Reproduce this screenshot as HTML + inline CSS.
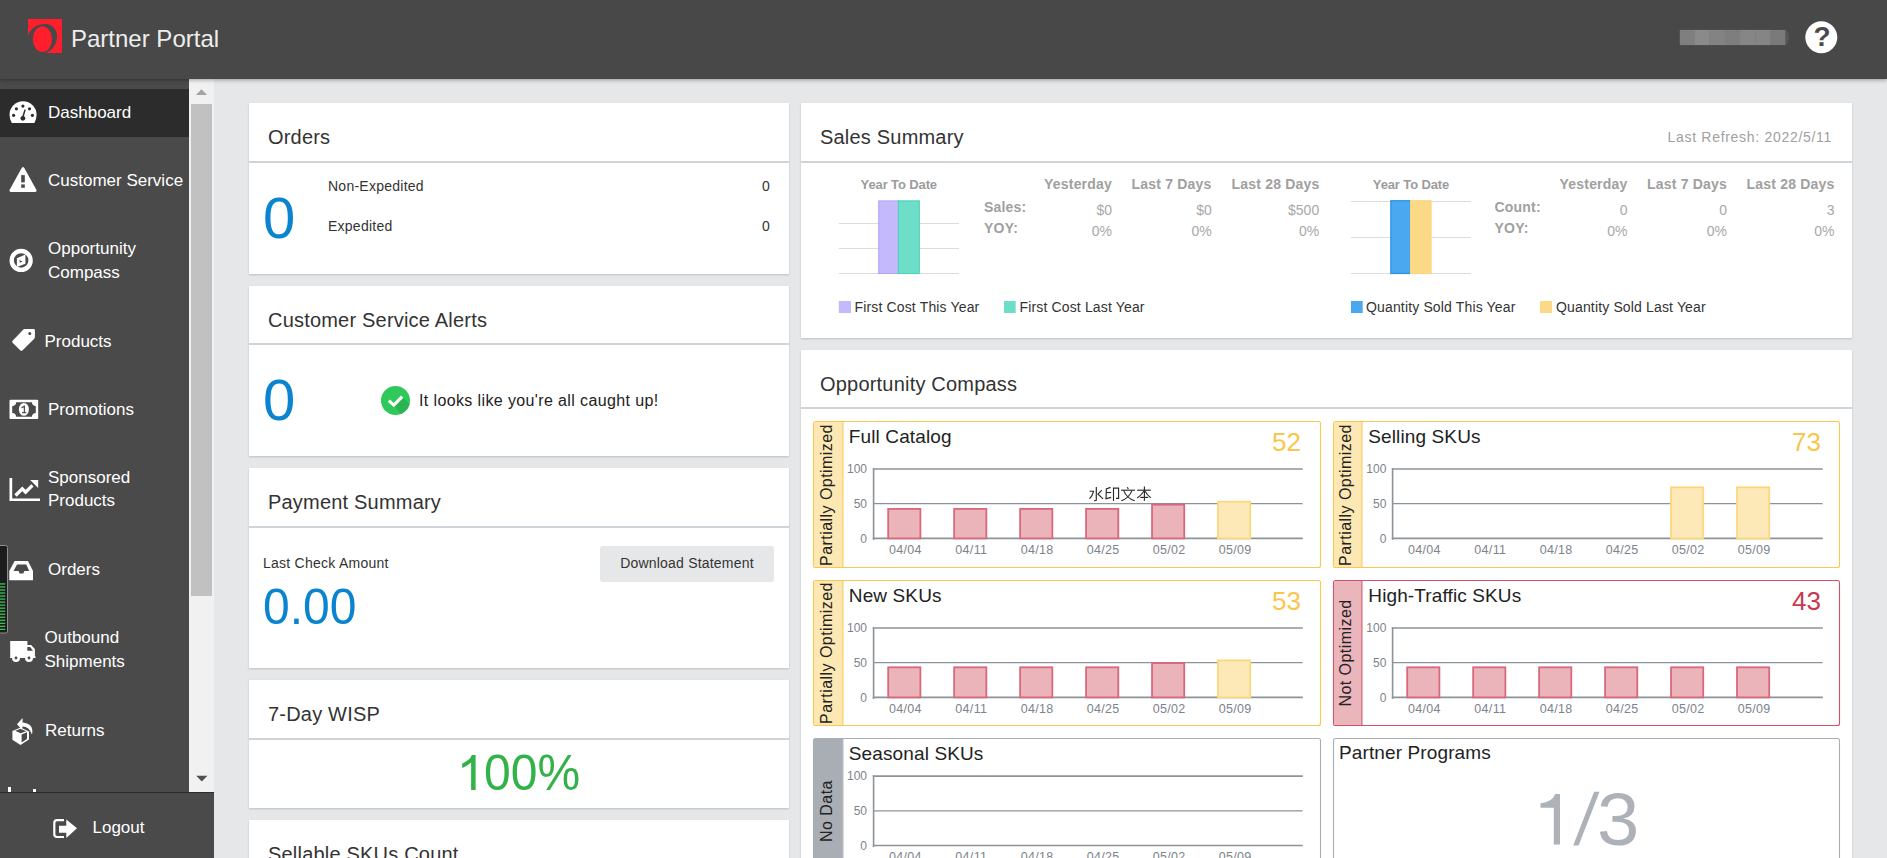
<!DOCTYPE html>
<html><head><meta charset="utf-8">
<style>
*{box-sizing:border-box;margin:0;padding:0}
html,body{width:1887px;height:858px;overflow:hidden;background:#e6e7e9;font-family:"Liberation Sans",sans-serif;color:#222}
.abs{position:absolute}
#hdr{position:absolute;left:0;top:0;width:1887px;height:79px;background:#484848;box-shadow:0 1px 4px rgba(0,0,0,.35);z-index:5}
#side{position:absolute;left:0;top:79px;width:189px;height:779px;background:#4a4a4a}
.nav{position:absolute;left:0;width:189px;color:#fff;font-size:17px;line-height:24px}
.nav span{position:absolute;white-space:nowrap}
.nav svg{position:absolute}
#sb{position:absolute;left:189px;top:79px;width:25px;height:713px;background:#f1f1f1}
#logout{position:absolute;left:0;top:792px;width:214px;height:66px;background:#4a4a4a;border-top:1px solid #2c2c2c}
.card{position:absolute;background:#fff;box-shadow:0 1px 2px rgba(0,0,0,.18)}
.card .ttl{position:absolute;left:19px;font-size:20px;letter-spacing:.2px;color:#333;white-space:nowrap;line-height:20px;margin-top:-1px}
.card .div{position:absolute;left:0;right:0;height:2px;background:#cfd4d9}
.t{position:absolute;white-space:nowrap}
.nt{font-size:17px;line-height:17px;color:#fff}
.big{color:#0a84cf;line-height:1}
.lbl{font-size:14px;line-height:14px;color:#333;letter-spacing:.25px}
.yl{font-size:12px;line-height:12px;color:#7d838a}
.xl{font-size:12.5px;line-height:12.5px;color:#7d838a;letter-spacing:.3px}
.st{font-size:19px;line-height:19px;color:#222;letter-spacing:.12px}
.sc{font-size:26px;line-height:26px}
.vt{font-size:16px;line-height:16px;color:#222;text-align:center;transform:rotate(-90deg);letter-spacing:.45px}
</style></head><body>

<!-- HEADER -->
<div id="hdr">
  <svg class="abs" style="left:28px;top:19px" width="34" height="34" viewBox="0 0 34 34">
    <rect width="34" height="34" fill="#fe1e2c"/>
    <path d="M0 16.6 C3 9 9 5 17 5 C24.5 5 29 10.5 29 17.5 C29 25.5 24 31.5 17.6 34 L0 34 Z" fill="#484848"/>
    <ellipse cx="14.4" cy="20.2" rx="9.6" ry="12.9" fill="#fe1e2c"/>
  </svg>
  <div class="t" style="left:71px;top:24.8px;font-size:24px;color:#eeeeee;line-height:28px">Partner Portal</div>
  <svg class="abs" style="left:0;top:0" width="1887" height="79"><path d="M1784 29.9 L1785.2 29.9 A3.6 7.6 0 0 1 1785.2 45.1 L1784 45.1 Z" fill="#575757"/><rect x="1679.8" y="29.9" width="15.25" height="15.2" fill="#7f7f7f"/><rect x="1695" y="29.9" width="14.85" height="15.2" fill="#8a8a8a"/><rect x="1709.8" y="29.9" width="15.25" height="15.2" fill="#838383"/><rect x="1725" y="29.9" width="15.05" height="15.2" fill="#7e7e7e"/><rect x="1740" y="29.9" width="15.15" height="15.2" fill="#868686"/><rect x="1755.1" y="29.9" width="14.95" height="15.2" fill="#858585"/><rect x="1770" y="29.9" width="15.25" height="15.2" fill="#7a7a7a"/><circle cx="1821.3" cy="37.2" r="16" fill="#fff"/></svg><div class="t" style="left:1806px;width:32px;text-align:center;top:22.5px;font-size:28px;line-height:28px;font-weight:bold;color:#4a4a4a">?</div>
</div>

<!-- SIDEBAR -->
<div id="side"></div>
<div class="nav" style="top:89px;height:48px;background:#2c2c2c"></div>
<div id="navitems">
<!-- Dashboard -->
<svg class="abs" style="left:0;top:89px" width="44" height="48" viewBox="0 89 44 48">
  <path d="M11.8 123 L34.4 123 Q36.6 118.8 36.6 114.8 A13.55 13.55 0 0 0 9.5 114.8 Q9.5 118.8 11.8 123 Z" fill="#fff"/>
  <g fill="#2c2c2c"><circle cx="22.9" cy="106.1" r="1.6"/><circle cx="16.4" cy="108.8" r="1.6"/><circle cx="29.5" cy="108.8" r="1.6"/><circle cx="13.6" cy="115.3" r="1.6"/><circle cx="32.4" cy="115.3" r="1.6"/><circle cx="22.9" cy="118.3" r="2.4"/></g>
  <path d="M22.6 118 L25.1 109.6" stroke="#2c2c2c" stroke-width="1.5"/>
</svg>
<div class="t nt" style="left:48px;top:104px">Dashboard</div>
<!-- Customer Service -->
<svg class="abs" style="left:0;top:160px" width="44" height="40" viewBox="0 160 44 40">
  <path d="M21.7 168 Q23 165.8 24.3 168 L36.2 189.6 Q37.4 192 34.8 192 L11.2 192 Q8.6 192 9.8 189.6 Z" fill="#fff"/>
  <rect x="21.2" y="175.1" width="3.6" height="7.3" fill="#4a4a4a"/><rect x="21.2" y="184.4" width="3.6" height="3.4" fill="#4a4a4a"/>
</svg>
<div class="t nt" style="left:48px;top:172px">Customer Service</div>
<!-- Opportunity Compass -->
<svg class="abs" style="left:0;top:240px" width="44" height="40" viewBox="0 240 44 40">
  <circle cx="21.15" cy="260.4" r="9.45" fill="none" stroke="#fff" stroke-width="4.4"/>
  <path d="M16.9 258.3 L25.4 254.6 L25.4 263.8 L16.9 267 Z" fill="#fff"/>
  <path d="M19.4 259.9 L22.5 261.4 L19.9 262.8 Z" fill="#4a4a4a"/>
</svg>
<div class="t nt" style="left:48px;top:240px">Opportunity</div>
<div class="t nt" style="left:48px;top:263.5px">Compass</div>
<!-- Products -->
<svg class="abs" style="left:0;top:320px" width="44" height="40" viewBox="0 320 44 40">
  <path d="M24.5 329 L33.6 329 Q34.9 329 34.9 330.3 L34.9 337 Q34.9 338.2 34 339.1 L22.6 350.2 Q21.4 351.3 20.2 350.2 L12.6 342.8 Q11.6 341.8 12.6 340.8 L23.4 329.6 Q23.9 329 24.5 329 Z" fill="#fff"/>
  <circle cx="29.8" cy="333.6" r="1.5" fill="#4a4a4a"/>
</svg>
<div class="t nt" style="left:44.5px;top:332.6px">Products</div>
<!-- Promotions -->
<svg class="abs" style="left:0;top:390px" width="44" height="40" viewBox="0 390 44 40">
  <rect x="9.5" y="399.8" width="28.7" height="19.2" rx="1" fill="#fff"/>
  <path d="M16.2 402.2 L31.9 402.2 A3.7 3.7 0 0 0 35.8 405.9 L35.8 413 A3.7 3.7 0 0 0 31.9 416.7 L16.2 416.7 A3.7 3.7 0 0 0 12.2 413 L12.2 405.9 A3.7 3.7 0 0 0 16.2 402.2 Z" fill="#4a4a4a"/>
  <ellipse cx="23.9" cy="409.4" rx="5" ry="6.4" fill="#fff"/>
  <path d="M21.5 408 L24.2 406.2 L24.4 406.2 L24.4 412.3 M22 412.6 L26.3 412.6" stroke="#555" stroke-width="1.3" fill="none"/>
</svg>
<div class="t nt" style="left:48px;top:400.6px">Promotions</div>
<!-- Sponsored Products -->
<svg class="abs" style="left:0;top:470px" width="44" height="40" viewBox="0 470 44 40">
  <path d="M9.5 478 L12.2 478 L12.2 498.4 L40 498.4 L40 500.9 L9.5 500.9 Z" fill="#fff"/>
  <path d="M15.5 495.5 L22.3 488.8 L25.6 492.2 L32.4 485.4" stroke="#fff" stroke-width="3.3" fill="none" stroke-linejoin="miter"/>
  <path d="M30.2 480.1 L38.2 480.1 L38.2 488 Z" fill="#fff"/>
</svg>
<div class="t nt" style="left:48px;top:468.6px">Sponsored</div>
<div class="t nt" style="left:48px;top:492.3px">Products</div>
<!-- Orders -->
<svg class="abs" style="left:0;top:540px" width="44" height="100" viewBox="0 540 44 100">
  <path d="M14.6 561 L28 561 L33 570.9 L33 580.2 L9.3 580.2 L9.3 570.9 Z" fill="#fff"/>
  <path d="M17 564.5 L26.2 564.5 L29.2 571 L24.3 571 L23.3 573.6 L19.6 573.6 L18.6 571 L13.5 571 Z" fill="#4a4a4a"/>
  <rect x="-3" y="545.5" width="10.5" height="87.5" rx="2" fill="#1c1c1c" stroke="#8f8f8f" stroke-width="1"/>
  <g fill="#3cc95a"><rect x="0" y="583.30" width="5.2" height="1.25"/><rect x="0" y="586.33" width="5.2" height="1.25"/><rect x="0" y="589.36" width="5.2" height="1.25"/><rect x="0" y="592.39" width="5.2" height="1.25"/><rect x="0" y="595.42" width="5.2" height="1.25"/><rect x="0" y="598.45" width="5.2" height="1.25"/><rect x="0" y="601.48" width="5.2" height="1.25"/><rect x="0" y="604.51" width="5.2" height="1.25"/><rect x="0" y="607.54" width="5.2" height="1.25"/><rect x="0" y="610.57" width="5.2" height="1.25"/><rect x="0" y="613.60" width="5.2" height="1.25"/><rect x="0" y="616.63" width="5.2" height="1.25"/><rect x="0" y="619.66" width="5.2" height="1.25"/><rect x="0" y="622.69" width="5.2" height="1.25"/><rect x="0" y="625.72" width="5.2" height="1.25"/><rect x="0" y="628.75" width="5.2" height="1.25"/></g>
</svg>
<div class="t nt" style="left:48px;top:561.4px">Orders</div>
<!-- Outbound Shipments -->
<svg class="abs" style="left:0;top:630px" width="44" height="40" viewBox="0 630 44 40">
  <path d="M10.2 641.1 L27.4 641.1 L27.4 645 L31.1 645 L34.9 648.9 L34.9 656.4 L35.6 656.4 L35.6 657.9 L10.2 657.9 Z" fill="#fff"/>
  <path d="M27.3 647 L30.2 647 L33 650.8 L27.3 650.8 Z" fill="#4a4a4a"/>
  <circle cx="16" cy="658" r="4" fill="#fff"/><circle cx="29" cy="658" r="4" fill="#fff"/>
  <circle cx="16" cy="658" r="1.4" fill="#4a4a4a"/><circle cx="29" cy="658" r="1.4" fill="#4a4a4a"/>
</svg>
<div class="t nt" style="left:44.5px;top:629.2px">Outbound</div>
<div class="t nt" style="left:44.5px;top:652.9px">Shipments</div>
<!-- Returns -->
<svg class="abs" style="left:0;top:710px" width="44" height="40" viewBox="0 710 44 40">
  <path d="M12.4 731 L20.6 727.6 L29 731.4 L29 739.4 L20.5 745 L12.4 739.8 Z" fill="#fff"/>
  <path d="M15.2 730.8 L20.6 728.8 L26.2 731.2 L20.6 733.2 Z" fill="#4a4a4a"/>
  <path d="M21.6 734.6 L27 732.2 L27 739 L21.6 742.6 Z" fill="#4a4a4a"/>
  <path d="M22.6 718 L17 724.2 L22.2 730 L22.4 726.4 Q29 726.2 32 734.6 Q34.2 723.4 22.6 722.4 Z" fill="#fff"/>
</svg>
<div class="t nt" style="left:45px;top:722px">Returns</div>
<div class="abs" style="left:8px;top:787px;width:3px;height:5px;background:#fff"></div>
<div class="abs" style="left:33px;top:789px;width:3px;height:3px;background:#fff"></div>
</div>
<div id="sb">
  <svg class="abs" style="left:0;top:0" width="25" height="713" viewBox="189 79 25 713">
    <path d="M195.9 95 L207.1 95 L201.5 89.2 Z" fill="#a3a3a3"/>
    <rect x="191" y="104" width="21" height="492" fill="#c1c1c1"/>
    <path d="M196.2 775.8 L207.4 775.8 L201.8 781.6 Z" fill="#505050"/>
  </svg>
</div>
<div id="logout">
  <svg class="abs" style="left:0;top:-1px" width="214" height="66" viewBox="0 792 214 66">
    <path d="M64 820.2 L57 820.2 Q54.3 820.2 54.3 822.9 L54.3 834.3 Q54.3 837 57 837 L64 837" stroke="#fff" stroke-width="2.2" fill="none"/>
    <path d="M59 825.7 L66.3 825.7 L66.3 819.6 L77 828.3 L66.3 838 L66.3 832.7 L59 832.7 Z" fill="#fff"/>
  </svg>
  <div class="t nt" style="left:92.5px;top:818.6px;margin-top:-793px">Logout</div>
</div>

<!-- CARDS LEFT COLUMN -->
<div class="card" style="left:249px;top:103px;width:540px;height:171px">
  <div class="ttl" style="top:25px">Orders</div>
  <div class="div" style="top:58px"></div>
  <div class="t big" style="left:14px;top:86px;font-size:58px">0</div>
  <div class="t lbl" style="left:79px;top:76px">Non-Expedited</div>
  <div class="t lbl" style="right:19px;top:76px">0</div>
  <div class="t lbl" style="left:79px;top:116px">Expedited</div>
  <div class="t lbl" style="right:19px;top:116px">0</div>
</div>
<div class="card" style="left:249px;top:286px;width:540px;height:170px">
  <div class="ttl" style="top:25px">Customer Service Alerts</div>
  <div class="div" style="top:57px"></div>
  <div class="t big" style="left:14px;top:85px;font-size:58px">0</div>
  <svg class="abs" style="left:132px;top:100px" width="29" height="29" viewBox="0 0 29 29">
    <defs><clipPath id="cc"><circle cx="14.5" cy="14.5" r="14.5"/></clipPath></defs>
    <circle cx="14.5" cy="14.5" r="14.5" fill="#2fc95b"/>
    <path d="M12.8 19.2 L21.2 10.6 L40 29 L30 40 Z" fill="#2bb551" clip-path="url(#cc)"/>
    <path d="M7.8 14.6 L12.8 19.2 L21.2 10.6" fill="none" stroke="#fff" stroke-width="3.1" stroke-linecap="butt" stroke-linejoin="miter"/>
  </svg>
  <div class="t" style="left:170px;top:106.8px;font-size:16px;line-height:16px;letter-spacing:.38px;color:#222">It looks like you're all caught up!</div>
</div>
<div class="card" style="left:249px;top:468px;width:540px;height:200px">
  <div class="ttl" style="top:25px">Payment Summary</div>
  <div class="div" style="top:58px"></div>
  <div class="t lbl" style="left:14px;top:88px">Last Check Amount</div>
  <div class="t big" style="left:14px;top:116px;font-size:48px;transform:scaleY(1.04);transform-origin:0 40.6px">0.00</div>
  <div class="abs" style="left:351px;top:78px;width:174px;height:36px;background:#e6e7e9;border-radius:3px"></div>
  <div class="t lbl" style="left:351px;width:174px;text-align:center;top:88px;letter-spacing:.2px">Download Statement</div>
</div>
<div class="card" style="left:249px;top:680px;width:540px;height:128px">
  <div class="ttl" style="top:25px">7-Day WISP</div>
  <div class="div" style="top:58px"></div>
  <svg class="abs" style="left:0;top:0" width="540" height="128" viewBox="249 680 540 128"><path d="M471.9 755 L475.6 755 L475.6 789.9 L471.1 789.9 L471.1 762.6 Q467.5 766 462.2 768 L462.2 763.5 Q469.5 760.5 471.9 755 Z" fill="#33b249"/></svg>
  <div class="t" style="left:235px;top:70px;font-size:48px;line-height:48px;color:#33b249;transform:scaleY(1.045);transform-origin:0 40.6px">00%</div>
</div>
<div class="card" style="left:249px;top:820px;width:540px;height:60px">
  <div class="ttl" style="top:25px">Sellable SKUs Count</div>
</div>

<!-- RIGHT COLUMN -->
<div class="card" style="left:801px;top:103px;width:1051px;height:235px">
  <div class="ttl" style="top:25px">Sales Summary</div>
  <div class="div" style="top:58px"></div>
  <div class="t" style="right:20px;top:27px;font-size:14px;line-height:14px;letter-spacing:.7px;color:#a0a0a0">Last Refresh: 2022/5/11</div>
</div>

<svg class="abs" style="left:0;top:0;pointer-events:none" width="1887" height="858">
  <g stroke="#dcdcdc" stroke-width="1.2">
    <line x1="838.8" y1="223.5" x2="959" y2="223.5"/><line x1="838.8" y1="248.5" x2="959" y2="248.5"/><line x1="838.8" y1="273.5" x2="959" y2="273.5"/>
    <line x1="1351" y1="201.5" x2="1471" y2="201.5"/><line x1="1351" y1="237.5" x2="1471" y2="237.5"/><line x1="1351" y1="273.5" x2="1471" y2="273.5"/>
  </g>
  <rect x="878.7" y="200.9" width="19.8" height="72.6" fill="#c3b9fb" stroke="#b0a3f8" stroke-width="1"/>
  <rect x="898.5" y="200.9" width="20.8" height="72.6" fill="#6fdec9" stroke="#4fd4b8" stroke-width="1.2"/>
  <rect x="1390.8" y="200.7" width="19.7" height="72.8" fill="#4aa8f0" stroke="#2b92e4" stroke-width="1.2"/>
  <rect x="1410.5" y="200.7" width="20.6" height="72.8" fill="#fcd987" stroke="#fbd57a" stroke-width="1"/>
  <rect x="838.8" y="301" width="12.2" height="12" fill="#c3b9fb"/>
  <rect x="1004" y="301" width="11.7" height="12" fill="#6fdec9"/>
  <rect x="1351" y="301" width="11.7" height="12" fill="#4aa8f0"/>
  <rect x="1540" y="301" width="12" height="12" fill="#fcd987"/>
</svg>

<div class="t" style="left:838.8px;width:120px;text-align:center;top:178px;font-size:13px;line-height:13px;font-weight:bold;color:#9c9c9c;letter-spacing:-.12px">Year To Date</div>
<div class="t" style="left:1351px;width:120px;text-align:center;top:178px;font-size:13px;line-height:13px;font-weight:bold;color:#9c9c9c;letter-spacing:-.12px">Year To Date</div>
<div class="t " style="right:775px;top:177.2px;font-size:14px;line-height:14px;font-weight:bold;color:#a0a0a0;letter-spacing:.2px">Yesterday</div>
<div class="t " style="right:675.5px;top:177.2px;font-size:14px;line-height:14px;font-weight:bold;color:#a0a0a0;letter-spacing:.2px">Last 7 Days</div>
<div class="t " style="right:567.5px;top:177.2px;font-size:14px;line-height:14px;font-weight:bold;color:#a0a0a0;letter-spacing:.2px">Last 28 Days</div>
<div class="t " style="right:259.5px;top:177.2px;font-size:14px;line-height:14px;font-weight:bold;color:#a0a0a0;letter-spacing:.2px">Yesterday</div>
<div class="t " style="right:160px;top:177.2px;font-size:14px;line-height:14px;font-weight:bold;color:#a0a0a0;letter-spacing:.2px">Last 7 Days</div>
<div class="t " style="right:52.5px;top:177.2px;font-size:14px;line-height:14px;font-weight:bold;color:#a0a0a0;letter-spacing:.2px">Last 28 Days</div>
<div class="t " style="left:984px;top:199.7px;font-size:14px;line-height:14px;font-weight:bold;color:#a0a0a0;letter-spacing:.2px">Sales:</div>
<div class="t " style="left:984px;top:220.8px;font-size:14px;line-height:14px;font-weight:bold;color:#a0a0a0;letter-spacing:.2px">YOY:</div>
<div class="t " style="left:1494.5px;top:199.7px;font-size:14px;line-height:14px;font-weight:bold;color:#a0a0a0;letter-spacing:.2px">Count:</div>
<div class="t " style="left:1494.5px;top:220.8px;font-size:14px;line-height:14px;font-weight:bold;color:#a0a0a0;letter-spacing:.2px">YOY:</div>
<div class="t " style="right:775px;top:203.2px;font-size:14px;line-height:14px;color:#a8a8a8">$0</div>
<div class="t " style="right:775px;top:223.8px;font-size:14px;line-height:14px;color:#a8a8a8">0%</div>
<div class="t " style="right:675.3px;top:203.2px;font-size:14px;line-height:14px;color:#a8a8a8">$0</div>
<div class="t " style="right:675.3px;top:223.8px;font-size:14px;line-height:14px;color:#a8a8a8">0%</div>
<div class="t " style="right:567.8px;top:203.2px;font-size:14px;line-height:14px;color:#a8a8a8">$500</div>
<div class="t " style="right:567.8px;top:223.8px;font-size:14px;line-height:14px;color:#a8a8a8">0%</div>
<div class="t " style="right:259.5px;top:203.2px;font-size:14px;line-height:14px;color:#a8a8a8">0</div>
<div class="t " style="right:259.5px;top:223.8px;font-size:14px;line-height:14px;color:#a8a8a8">0%</div>
<div class="t " style="right:160px;top:203.2px;font-size:14px;line-height:14px;color:#a8a8a8">0</div>
<div class="t " style="right:160px;top:223.8px;font-size:14px;line-height:14px;color:#a8a8a8">0%</div>
<div class="t " style="right:52.5px;top:203.2px;font-size:14px;line-height:14px;color:#a8a8a8">3</div>
<div class="t " style="right:52.5px;top:223.8px;font-size:14px;line-height:14px;color:#a8a8a8">0%</div>
<div class="t " style="left:854.5px;top:299.7px;font-size:14px;line-height:14px;color:#333;letter-spacing:.15px">First Cost This Year</div>
<div class="t " style="left:1019.5px;top:299.7px;font-size:14px;line-height:14px;color:#333;letter-spacing:.15px">First Cost Last Year</div>
<div class="t " style="left:1366px;top:299.7px;font-size:14px;line-height:14px;color:#333;letter-spacing:.15px">Quantity Sold This Year</div>
<div class="t " style="left:1556px;top:299.7px;font-size:14px;line-height:14px;color:#333;letter-spacing:.15px">Quantity Sold Last Year</div>
<div class="card" style="left:801px;top:350px;width:1051px;height:520px">
  <div class="ttl" style="top:25px">Opportunity Compass</div>
  <div class="div" style="top:57px"></div>
</div>
<svg class="abs" style="left:0;top:0" width="1887" height="858">
<rect x="813.5" y="421.5" width="507" height="146" rx="2" fill="#fff" stroke="#f9c84e" stroke-width="1.1"/>
<rect x="814" y="422" width="28.6" height="145" fill="#fde8b4"/>
<line x1="842.9" y1="422" x2="842.9" y2="567" stroke="#f9c84e" stroke-width="1.1"/>
<g stroke="#8d9399" stroke-width="1.6" fill="none" stroke-linecap="square"><line x1="873.6" y1="469.0" x2="1302" y2="469.0"/><line x1="873.6" y1="503.7" x2="1302" y2="503.7" stroke-width="1.2"/><line x1="873.6" y1="538.4" x2="1302" y2="538.4"/><line x1="873.6" y1="469.0" x2="873.6" y2="539.1"/></g>
<rect x="888.20" y="508.90" width="32.20" height="29.50" fill="#ebb4bb" stroke="#d9687b" stroke-width="1.8"/>
<rect x="954.16" y="508.90" width="32.20" height="29.50" fill="#ebb4bb" stroke="#d9687b" stroke-width="1.8"/>
<rect x="1020.12" y="508.90" width="32.20" height="29.50" fill="#ebb4bb" stroke="#d9687b" stroke-width="1.8"/>
<rect x="1086.08" y="508.90" width="32.20" height="29.50" fill="#ebb4bb" stroke="#d9687b" stroke-width="1.8"/>
<rect x="1152.04" y="504.70" width="32.20" height="33.70" fill="#ebb4bb" stroke="#d9687b" stroke-width="1.8"/>
<rect x="1218.00" y="501.70" width="32.20" height="36.70" fill="#fde9b7" stroke="#fcd77d" stroke-width="1.8"/>
<rect x="1333.5" y="421.5" width="506" height="146" rx="2" fill="#fff" stroke="#f9c84e" stroke-width="1.1"/>
<rect x="1334" y="422" width="27.6" height="145" fill="#fde8b4"/>
<line x1="1361.9" y1="422" x2="1361.9" y2="567" stroke="#f9c84e" stroke-width="1.1"/>
<g stroke="#8d9399" stroke-width="1.6" fill="none" stroke-linecap="square"><line x1="1392.6" y1="469.0" x2="1822" y2="469.0"/><line x1="1392.6" y1="503.7" x2="1822" y2="503.7" stroke-width="1.2"/><line x1="1392.6" y1="538.4" x2="1822" y2="538.4"/><line x1="1392.6" y1="469.0" x2="1392.6" y2="539.1"/></g>
<rect x="1671.04" y="487.30" width="32.20" height="51.10" fill="#fde9b7" stroke="#fcd77d" stroke-width="1.8"/>
<rect x="1737.00" y="487.30" width="32.20" height="51.10" fill="#fde9b7" stroke="#fcd77d" stroke-width="1.8"/>
<rect x="813.5" y="580.5" width="507" height="145" rx="2" fill="#fff" stroke="#f9c84e" stroke-width="1.1"/>
<rect x="814" y="581" width="28.6" height="144" fill="#fde8b4"/>
<line x1="842.9" y1="581" x2="842.9" y2="725" stroke="#f9c84e" stroke-width="1.1"/>
<g stroke="#8d9399" stroke-width="1.6" fill="none" stroke-linecap="square"><line x1="873.6" y1="628.0" x2="1302" y2="628.0"/><line x1="873.6" y1="662.7" x2="1302" y2="662.7" stroke-width="1.2"/><line x1="873.6" y1="697.4" x2="1302" y2="697.4"/><line x1="873.6" y1="628.0" x2="873.6" y2="698.1"/></g>
<rect x="888.20" y="667.30" width="32.20" height="30.10" fill="#ebb4bb" stroke="#d9687b" stroke-width="1.8"/>
<rect x="954.16" y="667.30" width="32.20" height="30.10" fill="#ebb4bb" stroke="#d9687b" stroke-width="1.8"/>
<rect x="1020.12" y="667.30" width="32.20" height="30.10" fill="#ebb4bb" stroke="#d9687b" stroke-width="1.8"/>
<rect x="1086.08" y="667.30" width="32.20" height="30.10" fill="#ebb4bb" stroke="#d9687b" stroke-width="1.8"/>
<rect x="1152.04" y="663.10" width="32.20" height="34.30" fill="#ebb4bb" stroke="#d9687b" stroke-width="1.8"/>
<rect x="1218.00" y="660.40" width="32.20" height="37.00" fill="#fde9b7" stroke="#fcd77d" stroke-width="1.8"/>
<rect x="1333.5" y="580.5" width="506" height="145" rx="2" fill="#fff" stroke="#cd5468" stroke-width="1.1"/>
<rect x="1334" y="581" width="27.6" height="144" fill="#ebb5bc"/>
<line x1="1361.9" y1="581" x2="1361.9" y2="725" stroke="#cd5468" stroke-width="1.1"/>
<g stroke="#8d9399" stroke-width="1.6" fill="none" stroke-linecap="square"><line x1="1392.6" y1="628.0" x2="1822" y2="628.0"/><line x1="1392.6" y1="662.7" x2="1822" y2="662.7" stroke-width="1.2"/><line x1="1392.6" y1="697.4" x2="1822" y2="697.4"/><line x1="1392.6" y1="628.0" x2="1392.6" y2="698.1"/></g>
<rect x="1407.20" y="667.30" width="32.20" height="30.10" fill="#ebb4bb" stroke="#d9687b" stroke-width="1.8"/>
<rect x="1473.16" y="667.30" width="32.20" height="30.10" fill="#ebb4bb" stroke="#d9687b" stroke-width="1.8"/>
<rect x="1539.12" y="667.30" width="32.20" height="30.10" fill="#ebb4bb" stroke="#d9687b" stroke-width="1.8"/>
<rect x="1605.08" y="667.30" width="32.20" height="30.10" fill="#ebb4bb" stroke="#d9687b" stroke-width="1.8"/>
<rect x="1671.04" y="667.30" width="32.20" height="30.10" fill="#ebb4bb" stroke="#d9687b" stroke-width="1.8"/>
<rect x="1737.00" y="667.30" width="32.20" height="30.10" fill="#ebb4bb" stroke="#d9687b" stroke-width="1.8"/>
<rect x="813.5" y="738.5" width="507" height="145" rx="2" fill="#fff" stroke="#a9aeb5" stroke-width="1.1"/>
<rect x="814" y="739" width="28.6" height="144" fill="#a9aeb5"/>
<line x1="842.9" y1="739" x2="842.9" y2="883" stroke="#a9aeb5" stroke-width="1.1"/>
<g stroke="#8d9399" stroke-width="1.6" fill="none" stroke-linecap="square"><line x1="873.6" y1="776.1" x2="1302" y2="776.1"/><line x1="873.6" y1="810.8000000000001" x2="1302" y2="810.8000000000001" stroke-width="1.2"/><line x1="873.6" y1="845.5" x2="1302" y2="845.5"/><line x1="873.6" y1="776.1" x2="873.6" y2="846.2"/></g>
<rect x="1333.5" y="738.5" width="506" height="145" rx="2" fill="#fff" stroke="#a9aeb5" stroke-width="1.1"/>
<g stroke="#2a2a2a" stroke-width="1.15" fill="none"><path d="M1096.3 487 L1096.3 500.3 L1094 500.8"/><path d="M1089.5 491.2 L1093.6 491.2 Q1092.5 496 1089.5 498.9"/><path d="M1101.8 490.2 L1097.8 494.4"/><path d="M1097.8 494 L1103.1 498.9"/><path d="M1110.5 487.4 L1106.3 488.9 L1106.1 498.7"/><path d="M1106.3 492.5 L1111.2 492.5"/><path d="M1105.4 498.9 L1111.2 497.4"/><path d="M1113.5 501 L1113.5 488.1 L1118.6 488.1 L1118.6 498.4 L1116 498.4"/><path d="M1127.3 487.2 L1128.3 489.1"/><path d="M1121.1 490.2 L1134.9 490.2"/><path d="M1131.9 490.6 Q1129 498 1121.3 500.8"/><path d="M1123.7 490.6 Q1126.5 498 1134.7 500.8"/><path d="M1137.2 490.2 L1150.8 490.2"/><path d="M1144.4 486.4 L1144.4 500.8"/><path d="M1144 491 Q1141 495.5 1137.2 498"/><path d="M1144.9 491 Q1147.5 495.5 1150.8 497.8"/><path d="M1140.2 497.4 L1148.2 497.4"/></g>
</svg>
<div class="t yl" style="right:1020.0px;top:463.2px">100</div>
<div class="t yl" style="right:1020.0px;top:497.9px">50</div>
<div class="t yl" style="right:1020.0px;top:532.6px">0</div>
<div class="t xl" style="left:875.3px;width:60px;text-align:center;top:543.9px">04/04</div>
<div class="t xl" style="left:941.3px;width:60px;text-align:center;top:543.9px">04/11</div>
<div class="t xl" style="left:1007.2px;width:60px;text-align:center;top:543.9px">04/18</div>
<div class="t xl" style="left:1073.2px;width:60px;text-align:center;top:543.9px">04/25</div>
<div class="t xl" style="left:1139.1px;width:60px;text-align:center;top:543.9px">05/02</div>
<div class="t xl" style="left:1205.1px;width:60px;text-align:center;top:543.9px">05/09</div>
<div class="t st" style="left:848.8px;top:426.6px">Full Catalog</div>
<div class="t sc" style="right:586px;top:429px;color:#f9c64c">52</div>
<div class="t vt" style="left:746.5px;top:486.5px;width:160px">Partially Optimized</div>
<div class="t yl" style="right:500.7px;top:463.2px">100</div>
<div class="t yl" style="right:500.7px;top:497.9px">50</div>
<div class="t yl" style="right:500.7px;top:532.6px">0</div>
<div class="t xl" style="left:1394.3px;width:60px;text-align:center;top:543.9px">04/04</div>
<div class="t xl" style="left:1460.3px;width:60px;text-align:center;top:543.9px">04/11</div>
<div class="t xl" style="left:1526.2px;width:60px;text-align:center;top:543.9px">04/18</div>
<div class="t xl" style="left:1592.2px;width:60px;text-align:center;top:543.9px">04/25</div>
<div class="t xl" style="left:1658.1px;width:60px;text-align:center;top:543.9px">05/02</div>
<div class="t xl" style="left:1724.1px;width:60px;text-align:center;top:543.9px">05/09</div>
<div class="t st" style="left:1368.3px;top:426.6px">Selling SKUs</div>
<div class="t sc" style="right:66px;top:429px;color:#f9c64c">73</div>
<div class="t vt" style="left:1265.5px;top:486.5px;width:160px">Partially Optimized</div>
<div class="t yl" style="right:1020.0px;top:622.2px">100</div>
<div class="t yl" style="right:1020.0px;top:656.9px">50</div>
<div class="t yl" style="right:1020.0px;top:691.6px">0</div>
<div class="t xl" style="left:875.3px;width:60px;text-align:center;top:702.9px">04/04</div>
<div class="t xl" style="left:941.3px;width:60px;text-align:center;top:702.9px">04/11</div>
<div class="t xl" style="left:1007.2px;width:60px;text-align:center;top:702.9px">04/18</div>
<div class="t xl" style="left:1073.2px;width:60px;text-align:center;top:702.9px">04/25</div>
<div class="t xl" style="left:1139.1px;width:60px;text-align:center;top:702.9px">05/02</div>
<div class="t xl" style="left:1205.1px;width:60px;text-align:center;top:702.9px">05/09</div>
<div class="t st" style="left:848.8px;top:585.6px">New SKUs</div>
<div class="t sc" style="right:586px;top:588px;color:#f9c64c">53</div>
<div class="t vt" style="left:746.5px;top:645.0px;width:160px">Partially Optimized</div>
<div class="t yl" style="right:500.7px;top:622.2px">100</div>
<div class="t yl" style="right:500.7px;top:656.9px">50</div>
<div class="t yl" style="right:500.7px;top:691.6px">0</div>
<div class="t xl" style="left:1394.3px;width:60px;text-align:center;top:702.9px">04/04</div>
<div class="t xl" style="left:1460.3px;width:60px;text-align:center;top:702.9px">04/11</div>
<div class="t xl" style="left:1526.2px;width:60px;text-align:center;top:702.9px">04/18</div>
<div class="t xl" style="left:1592.2px;width:60px;text-align:center;top:702.9px">04/25</div>
<div class="t xl" style="left:1658.1px;width:60px;text-align:center;top:702.9px">05/02</div>
<div class="t xl" style="left:1724.1px;width:60px;text-align:center;top:702.9px">05/09</div>
<div class="t st" style="left:1368.3px;top:585.6px">High-Traffic SKUs</div>
<div class="t sc" style="right:66px;top:588px;color:#c9384e">43</div>
<div class="t vt" style="left:1265.5px;top:645.0px;width:160px">Not Optimized</div>
<div class="t yl" style="right:1020.0px;top:770.3px">100</div>
<div class="t yl" style="right:1020.0px;top:805.0px">50</div>
<div class="t yl" style="right:1020.0px;top:839.7px">0</div>
<div class="t xl" style="left:875.3px;width:60px;text-align:center;top:851.0px">04/04</div>
<div class="t xl" style="left:941.3px;width:60px;text-align:center;top:851.0px">04/11</div>
<div class="t xl" style="left:1007.2px;width:60px;text-align:center;top:851.0px">04/18</div>
<div class="t xl" style="left:1073.2px;width:60px;text-align:center;top:851.0px">04/25</div>
<div class="t xl" style="left:1139.1px;width:60px;text-align:center;top:851.0px">05/02</div>
<div class="t xl" style="left:1205.1px;width:60px;text-align:center;top:851.0px">05/09</div>
<div class="t st" style="left:848.8px;top:743.6px">Seasonal SKUs</div>
<div class="t vt" style="left:746.5px;top:803.0px;width:160px">No Data</div>
<div class="t st" style="left:1339px;top:743px">Partner Programs</div>
<svg class="abs" style="left:0;top:0" width="1887" height="858"><g fill="#adb2b9"><path d="M1555.3 794.1 L1560 794.1 L1560 844.5 L1553.8 844.5 L1553.8 807.7 L1540.5 807.7 L1540.5 803.2 Q1552 802.5 1555.3 794.1 Z"/><path d="M1594.1 791.8 L1599.5 791.8 L1578.6 845.6 L1573.2 845.6 Z"/></g></svg>
<div class="t" style="left:1597px;top:780.6px;font-size:76px;line-height:76px;color:#adb2b9;transform:scaleY(.975);transform-origin:0 64.3px">3</div>
</body></html>
